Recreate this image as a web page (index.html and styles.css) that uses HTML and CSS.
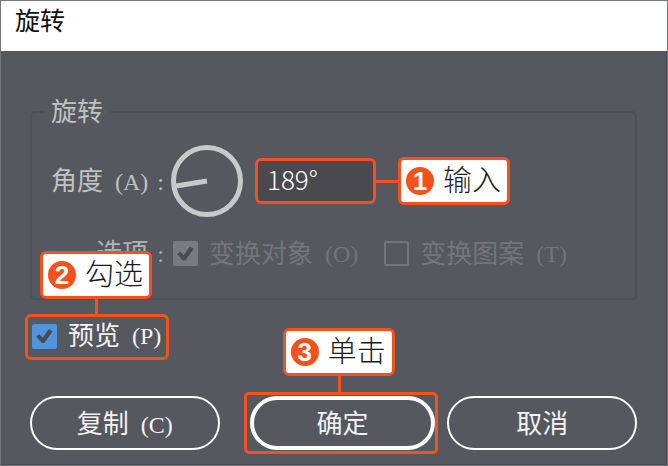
FILE: index.html
```html
<!DOCTYPE html>
<html lang="zh-CN">
<head>
  <meta charset="UTF-8">
  <meta name="viewport" content="width=device-width, initial-scale=1.0">
  <title>旋转</title>
  <link rel="stylesheet" href="styles.css">
</head>
<body>

  <div class="dialog">
    <h1 class="titlebar">旋转</h1>

    <form class="content">
      <fieldset class="group">
        <legend>旋转</legend>

        <div class="row angle-row">
          <label class="row-label" for="angle">角度<span class="key">(A)</span><span class="colon">:</span></label>
          <svg class="dial" viewBox="0 0 72 72">
            <circle cx="36" cy="36" r="33.5"/>
            <path d="M36 36 L5 41"/>
          </svg>
          <div class="field">
            <input class="angle" type="text" id="angle" value="189°">
            <div class="callout callout-right"><span class="step">1</span>输入</div>
          </div>
        </div>

        <div class="row options-row">
          <span class="row-label">选项<span class="colon">:</span></span>
          <label class="check"><input type="checkbox" checked disabled>变换对象<span class="key">(O)</span></label>
          <label class="check"><input type="checkbox" disabled>变换图案<span class="key">(T)</span></label>
        </div>
      </fieldset>

      <div class="preview">
        <label class="check"><input type="checkbox" checked>预览<span class="key">(P)</span></label>
        <div class="callout callout-top"><span class="step">2</span>勾选</div>
      </div>

      <div class="buttons">
        <button type="button">复制<span class="key">(C)</span></button>
        <div class="confirm">
          <button type="button" class="primary">确定</button>
          <div class="callout callout-top"><span class="step">3</span>单击</div>
        </div>
        <button type="button">取消</button>
      </div>
    </form>
  </div>

</body>
</html>
```

FILE: styles.css
```css
* {
  box-sizing: border-box;
}

body {
  margin: 0;
  background: #55585f;
  font-family: "Liberation Sans", "Noto Sans CJK SC", sans-serif;
  font-size: 26px;
  line-height: 32px;
  color: #f2f2f2;
}

.dialog {
  display: flex;
  flex-direction: column;
  min-height: 100vh;
  border: 1px solid #77787b;
  background: #55585f;
}

.titlebar {
  margin: 0;
  padding: 4px 14px 14px;
  background: #fff;
  color: #111;
  font-size: 25px;
  font-weight: 400;
}

.content {
  flex: 1;
  padding: 45px 29px 14px;
  border-right: 1px solid #47494e;
  border-bottom: 1px solid #47494e;
}

/* shortcut letter after a label */
.key,
.colon {
  font-family: "Liberation Serif", serif;
  font-size: 24px;
}

.key {
  margin-left: 12px;
}

.colon {
  padding: 0 7px 0 9px;
}

.group {
  margin: 0;
  padding: 17px 17px 28px 3px;
  border: 2px solid #4e5157;
  border-radius: 5px;
  color: #c0c1c3;
}

.group legend {
  margin-left: 9px;
  padding: 0 7px;
}

.row {
  display: flex;
  align-items: center;
}

.row-label {
  width: 136px;
  text-align: right;
  white-space: nowrap;
}

.angle-row {
  height: 72px;
}

.dial {
  width: 72px;
  height: 72px;
  fill: none;
  stroke: #c8c9c9;
  stroke-width: 5;
}

.field {
  position: relative;
  margin-left: 12px;
}

.angle {
  display: block;
  width: 121px;
  height: 46px;
  padding: 0 9px 6px;
  border: 3px solid #f4511c;
  border-radius: 6px;
  background: #4a4a4e;
  color: #fff;
  font-family: "Noto Sans CJK SC", sans-serif;
  font-size: 26px;
  font-weight: 300;
  outline: none;
}

.options-row {
  gap: 26px;
  margin-top: 20px;
  color: #72767c;
}

.options-row .row-label {
  margin-right: -24px;
  color: #b0b2b5;
}

.check {
  display: flex;
  align-items: center;
  white-space: nowrap;
}

.check input {
  appearance: none;
  width: 25px;
  height: 25px;
  margin: 0 11px 0 0;
  border: 2px solid #72767c;
  border-radius: 2px;
}

.check input:checked {
  border: none;
  background: #5294db;
}

.check input:checked:disabled {
  background: #787b81;
}

.check input:checked::before {
  content: "";
  display: block;
  width: 25px;
  height: 25px;
  background: #484b51;
  clip-path: polygon(16% 52%, 29% 43%, 43% 57%, 67% 22%, 83% 31%, 49% 78%, 40% 78%);
}

.preview {
  position: relative;
  width: 144px;
  margin: 14px 0 0 -5px;
  padding: 3px 0 5px 4px;
  border: 3px solid #f4511c;
  border-radius: 6px;
}

.buttons {
  display: flex;
  margin-top: 36px;
}

.buttons > * {
  flex: 1;
}

.buttons button {
  height: 54px;
  padding: 2px 0 0;
  border: 2px solid #fff;
  border-radius: 27px;
  background: transparent;
  color: #f2f2f2;
  font-family: inherit;
  font-size: 26px;
  line-height: 32px;
}

.confirm {
  position: relative;
  margin: 0 12px 0 30px;
}

/* frame round the default button */
.confirm::before {
  content: "";
  position: absolute;
  inset: -4px -3px -4px -6px;
  border: 3px solid #f4511c;
  border-radius: 5px;
}

.buttons .primary {
  display: block;
  width: 100%;
  border-width: 4px;
}

.callout {
  position: absolute;
  display: flex;
  align-items: center;
  gap: 9px;
  height: 48px;
  padding: 0 6px 0 5px;
  border: 3px solid #f4511c;
  border-radius: 6px;
  background: #fff;
  color: #1a1a1a;
  font-size: 29px;
  font-weight: 300;
  white-space: nowrap;
}

.callout::after {
  content: "";
  position: absolute;
  background: #f4511c;
}

.callout-right {
  top: -1px;
  left: calc(100% + 22px);
}

.callout-right::after {
  right: calc(100% + 3px);
  width: 22px;
  height: 3px;
}

.callout-top::after {
  top: calc(100% + 3px);
  left: 52px;
  width: 3px;
  height: 17px;
}

.preview .callout {
  bottom: calc(100% + 18px);
  left: 12px;
}

.confirm .callout {
  bottom: calc(100% + 20px);
  left: 33px;
}

.step {
  width: 28px;
  height: 28px;
  border-radius: 50%;
  background: #f4511c;
  color: #fff;
  font-size: 26px;
  font-weight: 700;
  line-height: 28px;
  text-align: center;
}
```
